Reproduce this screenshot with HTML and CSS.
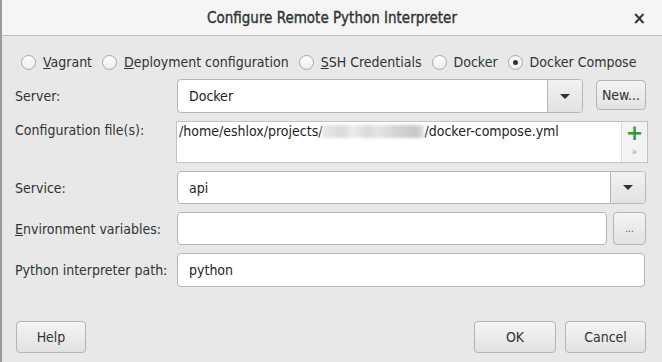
FILE: index.html
```html
<!DOCTYPE html>
<html lang="en">
<head>
  <meta charset="UTF-8">
  <title>Configure Remote Python Interpreter</title>
  <link rel="stylesheet" href="styles.css">
</head>
<body>

  <div class="window">
    <div class="titlebar">
      <span class="title">Configure Remote Python Interpreter</span>
      <span class="close">×</span>
    </div>

    <div class="content">
      <div class="radios">
        <label class="radio"><span class="dot"></span><span><u>V</u>agrant</span></label>
        <label class="radio"><span class="dot"></span><span><u>D</u>eployment configuration</span></label>
        <label class="radio"><span class="dot"></span><span><u>S</u>SH Credentials</span></label>
        <label class="radio"><span class="dot"></span><span>Docker</span></label>
        <label class="radio"><span class="dot checked"></span><span>Docker Compose</span></label>
      </div>

      <div class="form">
        <div class="label">Server:</div>
        <div class="field">
          <div class="combo">
            <span class="combo-text">Docker</span>
            <span class="arrow"></span>
          </div>
          <button class="btn new">New...</button>
        </div>

        <div class="label top">Configuration file(s):</div>
        <div class="field">
          <div class="files">
            <div class="files-text">/home/eshlox/projects/<span class="blur"></span>/docker-compose.yml</div>
            <div class="files-side">
              <span class="plus">+</span>
              <span class="more">»</span>
            </div>
          </div>
        </div>

        <div class="label">Service:</div>
        <div class="field">
          <div class="combo">
            <span class="combo-text">api</span>
            <span class="arrow"></span>
          </div>
        </div>

        <div class="label"><span><u>E</u>nvironment variables:</span></div>
        <div class="field">
          <div class="input"></div>
          <button class="btn dots">...</button>
        </div>

        <div class="label">Python interpreter path:</div>
        <div class="field">
          <div class="input path">python</div>
        </div>
      </div>

      <div class="footer">
        <button class="btn help">Help</button>
        <div class="spacer"></div>
        <button class="btn ok">OK</button>
        <button class="btn cancel">Cancel</button>
      </div>
    </div>
  </div>

</body>
</html>
```

FILE: styles.css
```css
* { box-sizing: border-box; }
html, body {
  margin: 0;
  padding: 0;
  background: #e8e8e8;
}
body {
  font-family: "DejaVu Sans", sans-serif;
  font-stretch: condensed;
  font-size: 14px;
  color: #2e3436;
}
.window {
  width: 662px;
  height: 362px;
  border-left: 2px solid #9a9a9a;
  background: #e8e8e8;
}
.titlebar {
  height: 36px;
  background: #f5f5f5;
  border-bottom: 1px solid #bdbdbd;
  display: flex;
  align-items: center;
  justify-content: center;
  position: relative;
}
.title {
  font-size: 15px;
  color: #2e3436;
  -webkit-text-stroke: 0.35px #2e3436;
}
.close {
  position: absolute;
  right: 16px;
  top: 7px;
  font-size: 18px;
  font-weight: bold;
  color: #2e3436;
}
.content {
  padding: 16px 16px 0 13px;
}
.radios {
  display: flex;
  align-items: center;
  height: 20px;
  gap: 10px;
  padding-left: 6px;
  white-space: nowrap;
}
.radio {
  display: flex;
  align-items: center;
  gap: 7px;
  color: #2e3436;
}
.dot {
  width: 15px;
  height: 15px;
  border-radius: 50%;
  border: 1px solid #a8a8a8;
  background: linear-gradient(#ffffff, #ededed);
  position: relative;
  flex: none;
}
.dot.checked::after {
  content: "";
  position: absolute;
  left: 4px;
  top: 4px;
  width: 5px;
  height: 5px;
  border-radius: 50%;
  background: #2e3436;
}
.form {
  display: grid;
  grid-template-columns: 162px 1fr;
  grid-template-rows: 34px 42px 33px 33px 34px;
  row-gap: 8px;
  margin-top: 7px;
}
.label {
  display: flex;
  align-items: center;
  color: #2e3436;
  white-space: nowrap;
}
.label.top {
  align-items: flex-start;
  padding-top: 1px;
}
.field {
  display: flex;
  gap: 6px;
  align-items: stretch;
}
.combo {
  flex: 1;
  display: flex;
  background: #ffffff;
  border: 1px solid #b6b6b6;
  border-radius: 4px;
  overflow: hidden;
}
.combo-text {
  flex: 1;
  display: flex;
  align-items: center;
  padding-left: 11px;
  color: #1e1e1e;
}
.arrow {
  width: 35px;
  border-left: 1px solid #b6b6b6;
  background: linear-gradient(#f2f2f2, #e2e2e2);
  display: flex;
  align-items: center;
  justify-content: center;
}
.arrow::after {
  content: "";
  border-left: 5px solid transparent;
  border-right: 5px solid transparent;
  border-top: 5px solid #2e3436;
}
.btn {
  font: inherit;
  color: #2e3436;
  background: linear-gradient(#f4f4f4, #e2e2e2);
  border: 1px solid #b4b4b4;
  border-radius: 4px;
  padding: 0;
}
.new {
  width: 50px;
  height: 30px;
  margin: 1px 0 0 7px;
}
.files {
  flex: 1;
  display: flex;
  border: 1px solid #c2c2c2;
  background: #ffffff;
  margin-left: -1px;
  margin-right: -2px;
}
.files-text {
  flex: 1;
  padding: 1px 0 0 2px;
  color: #1e1e1e;
  white-space: nowrap;
}
.blur {
  display: inline-block;
  width: 102px;
  height: 13px;
  vertical-align: -2px;
  background: linear-gradient(90deg, #e8e8e8 0%, #dadada 20%, #ececec 30%, #d8d8d8 45%, #e4e4e4 55%, #d6d6d6 70%, #c8c8c8 92%, #e0e0e0 100%);
  filter: blur(1.5px);
}
.files-side {
  width: 26px;
  border-left: 1px solid #dcdcdc;
  background: #f3f3f3;
  display: flex;
  flex-direction: column;
  align-items: center;
}
.plus {
  color: #2f9a3a;
  font-size: 21px;
  font-weight: bold;
  line-height: 22px;
  font-stretch: normal;
}
.more {
  color: #a0a0a0;
  font-size: 10px;
  line-height: 12px;
  margin-top: 2px;
}
.input {
  flex: 1;
  background: #ffffff;
  border: 1px solid #b6b6b6;
  border-radius: 4px;
  display: flex;
  align-items: center;
  padding-left: 11px;
  color: #1e1e1e;
}
.input.path { margin-right: 1px; }
.dots {
  width: 33px;
  font-size: 10px;
  color: #555;
}
.footer {
  display: flex;
  align-items: center;
  gap: 9px;
  margin-top: 34px;
  padding-left: 1px;
}
.footer .btn {
  height: 32px;
}
.spacer { flex: 1; }
.help { width: 70px; }
.ok { width: 82px; }
.cancel { width: 81px; }
```
